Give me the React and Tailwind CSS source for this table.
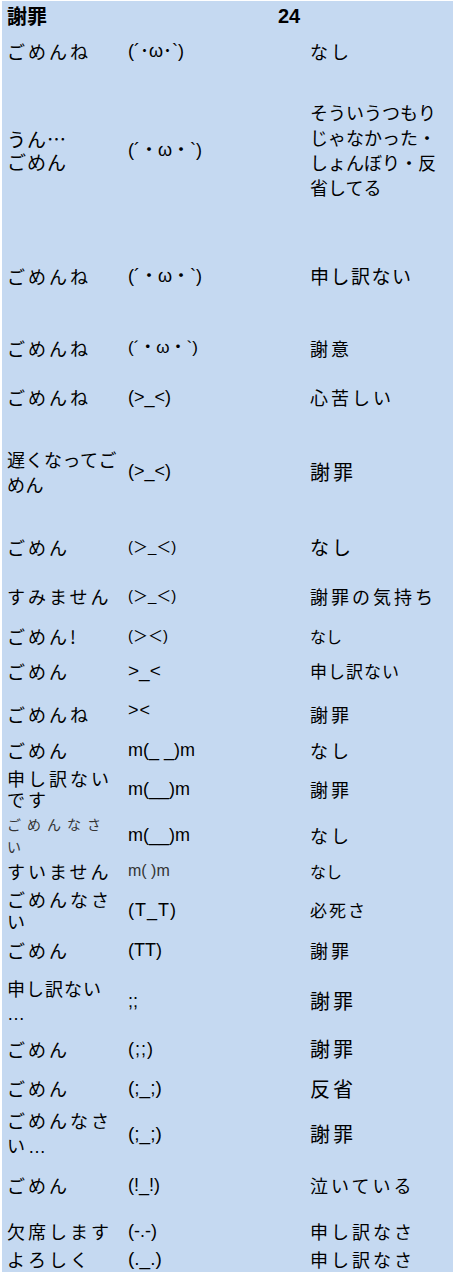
import React from "react";

const JP = "font-['Noto_Sans_CJK_JP','Noto_Sans_CJK_SC',sans-serif]";
const EM = "font-['Liberation_Sans','Noto_Sans_CJK_JP',sans-serif]";

const A = "text-[18px] tracking-[3px]"; // default jp
const E = "text-[18px]"; // default emoticon

const rows = [
  { r: "h-[32px] pb-[4px]", c1: { t: ["謝罪"], k: "text-[20px] font-bold" }, c2: { t: ["24"], k: "pl-[150px] text-[20px] font-bold" }, c3: null },
  { r: "h-[67px] pb-[31px]", c1: { t: ["ごめんね"], k: A }, c2: { t: ["(´･ω･`)"], k: E }, c3: { t: ["なし"], k: A } },
  { r: "h-[113px] pb-[13px]", c1: { t: ["うん…", "ごめん"], k: "text-[19px] tracking-[1px] leading-[23px]" }, c2: { t: ["(´・ω・`)"], k: E }, c3: { t: ["そういうつもり", "じゃなかった・", "しょんぼり・反", "省してる"], k: "text-[18px] leading-[25px]" } },
  { r: "h-[99px] pt-[27px]", c1: { t: ["ごめんね"], k: A }, c2: { t: ["(´・ω・`)"], k: E }, c3: { t: ["申し訳ない"], k: "text-[19px] tracking-[1.5px]" } },
  { r: "h-[60px] pt-[12px]", c1: { t: ["ごめんね"], k: A }, c2: { t: ["(´・ω・`)"], k: "text-[17px]" }, c3: { t: ["謝意"], k: A } },
  { r: "h-[62px] pb-[12px]", c1: { t: ["ごめんね"], k: A }, c2: { t: ["(>_<)"], k: E }, c3: { t: ["心苦しい"], k: A } },
  { r: "h-[75px]", c1: { t: ["遅くなってご", "めん"], k: "text-[18px] tracking-[0.5px] leading-[25px]" }, c2: { t: ["(>_<)"], k: E }, c3: { t: ["謝罪"], k: "text-[20px] tracking-[3px]" } },
  { r: "h-[62px] pt-[14px]", c1: { t: ["ごめん"], k: A }, c2: { t: ["(＞_＜)"], k: "text-[15px]" }, c3: { t: ["なし"], k: "text-[19px] tracking-[3px]" } },
  { r: "h-[45px] pt-[5px]", c1: { t: ["すみません"], k: A }, c2: { t: ["(＞_＜)"], k: "text-[15px]" }, c3: { t: ["謝罪の気持ち"], k: A } },
  { r: "h-[37px] pt-[3px]", c1: { t: ["ごめん!"], k: A }, c2: { t: ["(＞＜)"], k: "text-[15px]" }, c3: { t: ["なし"], k: "text-[16px]" } },
  { r: "h-[39px] pb-[3px]", c1: { t: ["ごめん"], k: A }, c2: { t: [">_<"], k: "text-[19px]" }, c3: { t: ["申し訳ない"], k: "text-[17px] tracking-[1px]" } },
  { r: "h-[40px] pt-[4px]", c1: { t: ["ごめんね"], k: A }, c2: { t: ["><"], k: "text-[18px] tracking-[1px] -translate-y-[4px]" }, c3: { t: ["謝罪"], k: A } },
  { r: "h-[36px]", c1: { t: ["ごめん"], k: A }, c2: { t: ["m(_ _)m"], k: E }, c3: { t: ["なし"], k: A } },
  { r: "h-[41px] pb-[3px]", c1: { t: ["申し訳ない", "です"], k: "text-[18px] tracking-[3px] leading-[21px]" }, c2: { t: ["m(__)m"], k: E }, c3: { t: ["謝罪"], k: A } },
  { r: "h-[42px] pt-[4px]", c1: { t: ["ごめんなさ", "い"], k: "text-[14px] tracking-[6px] leading-[22px] text-[#333]" }, c2: { t: ["m(__)m"], k: E }, c3: { t: ["なし"], k: A } },
  { r: "h-[37px] pt-[3px]", c1: { t: ["すいません"], k: A }, c2: { t: ["m( )m"], k: "text-[16px] text-[#333]" }, c3: { t: ["なし"], k: "text-[16px]" } },
  { r: "h-[40px] pb-[4px]", c1: { t: ["ごめんなさ", "い"], k: "text-[18px] tracking-[3px] leading-[22px]" }, c2: { t: ["(T_T)"], k: "text-[18px] tracking-[1px]" }, c3: { t: ["必死さ"], k: "text-[17px] tracking-[2px]" } },
  { r: "h-[47px] pb-[3px]", c1: { t: ["ごめん"], k: A }, c2: { t: ["(TT)"], k: E }, c3: { t: ["謝罪"], k: A } },
  { r: "h-[49px]", c1: { t: ["申し訳ない", "…"], k: "text-[18px] tracking-[1px] leading-[26px]" }, c2: { t: [";;"], k: E }, c3: { t: ["謝罪"], k: "text-[20px] tracking-[3px]" } },
  { r: "h-[45px] pt-[5px]", c1: { t: ["ごめん"], k: A }, c2: { t: ["(;;)"], k: "text-[18px] tracking-[1px]" }, c3: { t: ["謝罪"], k: "text-[20px] tracking-[3px]" } },
  { r: "h-[39px]", c1: { t: ["ごめん"], k: A }, c2: { t: ["(;_;)"], k: "text-[19px]" }, c3: { t: ["反省"], k: "text-[20px] tracking-[3px]" } },
  { r: "h-[48px] pb-[10px]", c1: { t: ["ごめんなさ", "い…"], k: "text-[18px] tracking-[3px] leading-[25px]" }, c2: { t: ["(;_;)"], k: "text-[19px]" }, c3: { t: ["謝罪"], k: "text-[20px] tracking-[3px]" } },
  { r: "h-[52px] pt-[6px]", c1: { t: ["ごめん"], k: A }, c2: { t: ["(!_!)"], k: E }, c3: { t: ["泣いている"], k: A } },
  { r: "h-[37px] pt-[9px]", c1: { t: ["欠席します"], k: A }, c2: { t: ["(-.-)"], k: E }, c3: { t: ["申し訳なさ"], k: A } },
  { r: "h-[27px]", c1: { t: ["よろしく"], k: A }, c2: { t: ["(._.)"], k: "text-[19px]" }, c3: { t: ["申し訳なさ"], k: A } },
];

function Line({ s }) {
  if (s.endsWith("…") && s.length > 1 && s !== "うん…") {
    return (
      <div>
        {s.slice(0, -1)}
        <span className="font-['Liberation_Sans',sans-serif]">…</span>
      </div>
    );
  }
  if (s === "…") {
    return <div className="font-['Liberation_Sans',sans-serif]">…</div>;
  }
  return <div>{s}</div>;
}

function Cell({ c, font }) {
  if (!c) return <div />;
  return (
    <div className={`${font} ${c.k} whitespace-nowrap`}>
      {c.t.map((s, i) => (
        <Line key={i} s={s} />
      ))}
    </div>
  );
}

export default function App() {
  return (
    <div className="w-[454px] h-[1273px] bg-white pt-[1px] pl-[2px] text-black">
      <div className="w-[451px] h-[1271px] bg-[#c5d9f1] overflow-hidden">
        {rows.map((row, i) => (
          <div key={i} className={`grid grid-cols-[121px_182px_1fr] items-center pl-[5px] ${row.r}`}>
            <Cell c={row.c1} font={JP} />
            <Cell c={row.c2} font={EM} />
            <Cell c={row.c3} font={JP} />
          </div>
        ))}
      </div>
    </div>
  );
}
